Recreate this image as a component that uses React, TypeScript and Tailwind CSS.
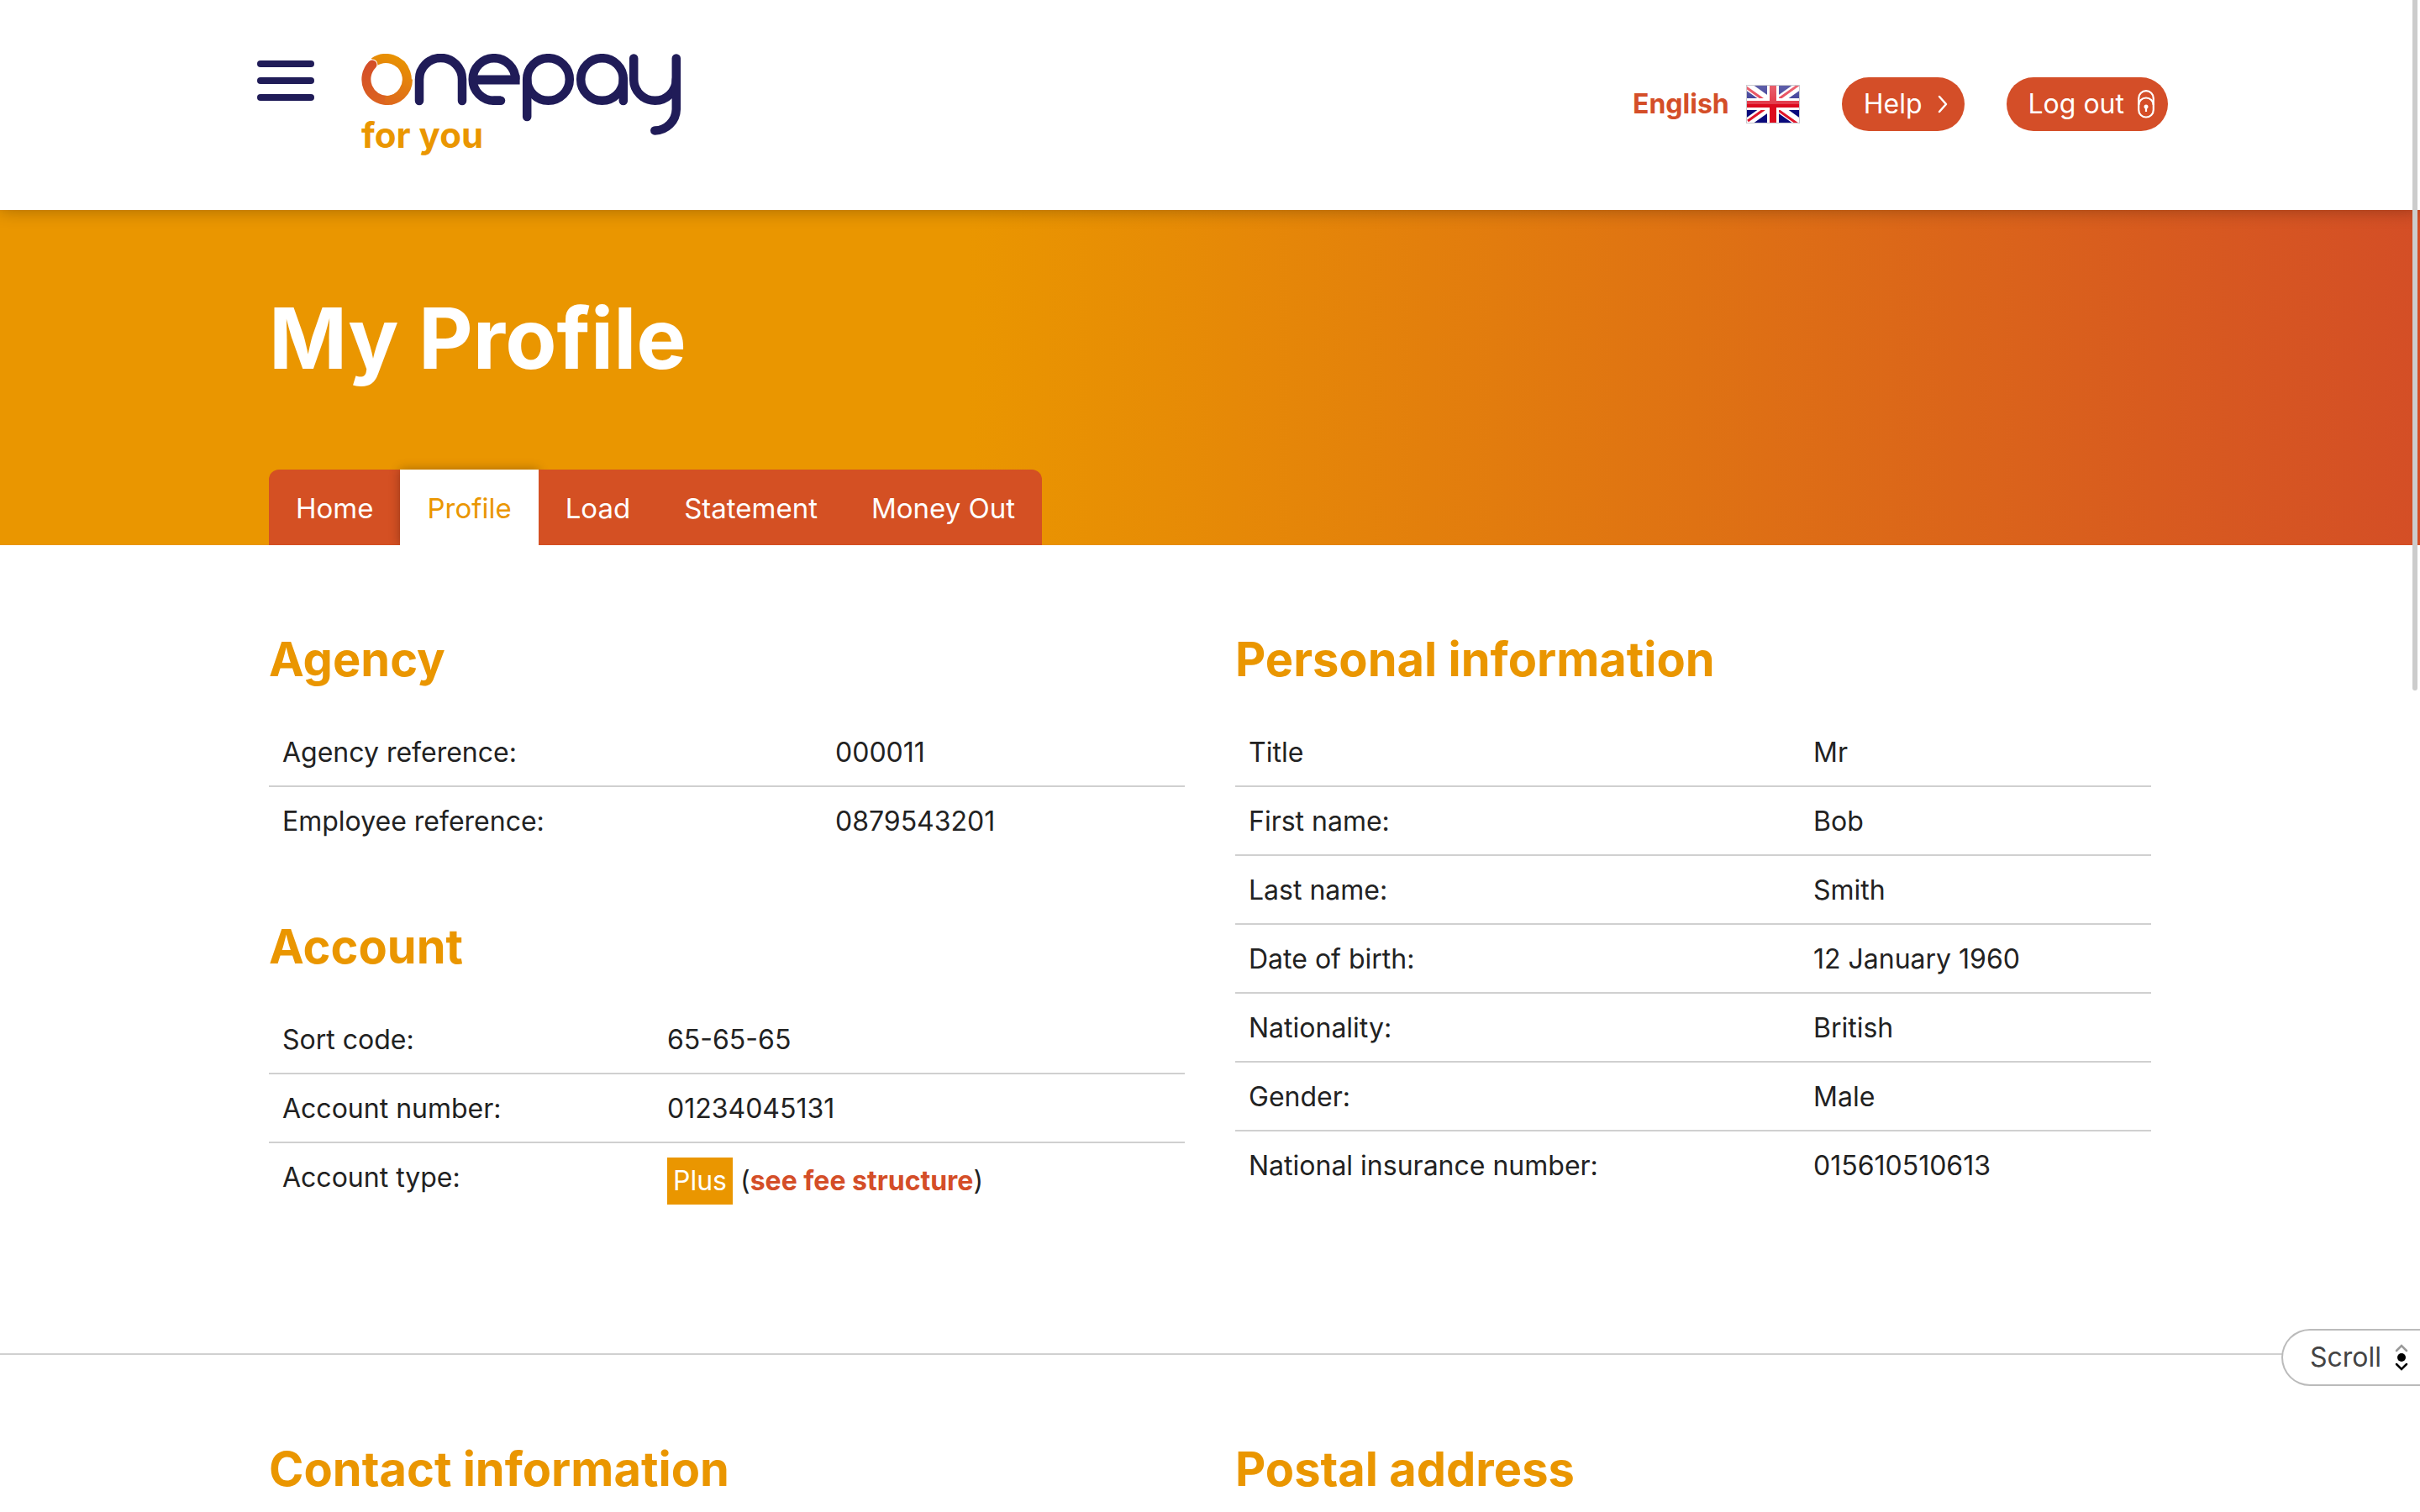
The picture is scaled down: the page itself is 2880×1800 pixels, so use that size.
import type { ReactNode } from "react";

type Row = { label: string; value: ReactNode };

const tabs = ["Home", "Profile", "Load", "Statement", "Money Out"];

const agency: Row[] = [
  { label: "Agency reference:", value: "000011" },
  { label: "Employee reference:", value: "0879543201" },
];

const account: Row[] = [
  { label: "Sort code:", value: "65-65-65" },
  { label: "Account number:", value: "01234045131" },
  {
    label: "Account type:",
    value: (
      <>
        <span className="inline-block bg-[#ea9600] px-[7px] leading-[56px] text-white">Plus</span> (
        <a href="#fees" className="font-bold text-[#d44e28]">
          see fee structure
        </a>
        )
      </>
    ),
  },
];

const personal: Row[] = [
  { label: "Title", value: "Mr" },
  { label: "First name:", value: "Bob" },
  { label: "Last name:", value: "Smith" },
  { label: "Date of birth:", value: "12 January 1960" },
  { label: "Nationality:", value: "British" },
  { label: "Gender:", value: "Male" },
  { label: "National insurance number:", value: "015610510613" },
];

function Logo() {
  return (
    <a href="#home" aria-label="onepay for you" className="flex flex-col">
      <svg width="382" height="98" viewBox="0 0 382 98" fill="none" aria-hidden="true">
        <defs>
          <linearGradient id="ring" x1="40" y1="0" x2="16" y2="60" gradientUnits="userSpaceOnUse">
            <stop offset="0" stopColor="#e99400" />
            <stop offset="1" stopColor="#dc6420" />
          </linearGradient>
          <linearGradient id="ringTail" x1="10" y1="12" x2="28" y2="58" gradientUnits="userSpaceOnUse">
            <stop offset="0" stopColor="#d44e28" />
            <stop offset="1" stopColor="#dc6420" />
          </linearGradient>
        </defs>
        <g strokeWidth="11">
          <path d="M15 10 A25 25 0 1 1 30.5 55.5" stroke="url(#ring)" />
          <path d="M13 13 A25 25 0 0 0 31 55.500" stroke="#fff" strokeWidth="13" strokeLinecap="round" />
          <path d="M13 13 A25 25 0 0 0 31 55.500" stroke="url(#ringTail)" strokeLinecap="round" />
          <path d="M28 55.400 A25 25 0 0 0 55.500 30.500" stroke="url(#ring)" />
        </g>
        <g stroke="#201c58" strokeWidth="10.5" strokeLinecap="round">
          <path d="M69 56 V30.500 a25.500 25.500 0 0 1 51 0 V56" />
          <path d="M166 55.800 H158 a25.300 25.300 0 1 1 25.300 -25.300" strokeLinecap="butt" />
          <path d="M166 55.800 H158" />
          <path d="M134 31 H188.600" strokeWidth="11" strokeLinecap="butt" />
          <circle cx="222.500" cy="30.500" r="25.300" />
          <path d="M197.200 30.500 V75" />
          <circle cx="286.500" cy="30.500" r="25.300" />
          <path d="M311.800 30.500 V56" />
          <path d="M324.200 5.500 V30.500 a25.300 25.300 0 0 0 50.600 0" />
          <path d="M374.800 5.500 V66 a26 26 0 0 1 -25.500 25.500" />
        </g>
      </svg>
      <span className="-mt-[22px] text-[42px] leading-[42px] font-bold text-[#ea9600]">for you</span>
    </a>
  );
}

function Flag() {
  return (
    <svg width="64" height="46" viewBox="0 0 64 46" aria-hidden="true">
      <defs>
        <linearGradient id="gloss" x1="0" y1="0" x2="0" y2="1">
          <stop offset="0" stopColor="#fff" stopOpacity="0.35" />
          <stop offset="1" stopColor="#fff" stopOpacity="0.2" />
        </linearGradient>
      </defs>
      <rect x="0.5" y="0.500" width="63" height="45" fill="#fff" stroke="#c9c9cf" />
      <svg x="1" y="1" width="62" height="44" viewBox="0 0 62 44">
        <rect width="62" height="44" fill="#0a0a7c" />
        <path d="M0 0 L62 44 M62 0 L0 44" stroke="#fff" strokeWidth="10" />
        <path d="M0 0 L31 22 M31 22 L62 44" stroke="#e0152a" strokeWidth="3" transform="translate(-1 2)" />
        <path d="M62 0 L31 22 M31 22 L0 44" stroke="#e0152a" strokeWidth="3" transform="translate(1 -2)" />
        <path d="M31 0 V44 M0 22 H62" stroke="#fff" strokeWidth="14" />
        <path d="M31 0 V44 M0 22 H62" stroke="#dc0a1e" strokeWidth="8" />
        <rect width="62" height="22" fill="url(#gloss)" />
      </svg>
    </svg>
  );
}

function LockIcon() {
  return (
    <svg width="20" height="34" viewBox="0 0 20 34" fill="none" stroke="#fff" strokeWidth="2.200" aria-hidden="true">
      <path d="M1.200 18 V10 a8.800 8.800 0 0 1 17.600 0 V18" />
      <rect x="1.200" y="9.500" width="17.600" height="23" rx="8.800" />
      <circle cx="10" cy="20" r="2.500" fill="#fff" stroke="none" />
      <path d="M10 20 V26" />
    </svg>
  );
}

function ScrollIcon() {
  return (
    <svg width="16" height="32" viewBox="0 0 16 32" fill="none" strokeWidth="2.500" strokeLinecap="round" aria-hidden="true">
      <path d="M2 8 L8 2 L14 8" stroke="#999" />
      <circle cx="8" cy="16" r="5" fill="#000" />
      <path d="M2 24 L8 30 L14 24" stroke="#000" />
    </svg>
  );
}

function DetailTable({ title, rows, labelWidth }: { title: string; rows: Row[]; labelWidth: string }) {
  return (
    <section>
      <h2 className="mb-[38px] text-[56px] leading-[64px] font-bold text-[#ea9600]">{title}</h2>
      <table className="w-full table-fixed border-collapse text-left">
        <tbody>
          {rows.map((row) => (
            <tr key={row.label} className="border-b-2 border-[#d0d0d0] last:border-b-0">
              <th scope="row" className={`${labelWidth} px-4 pt-[17px] pb-[15px] align-top font-normal`}>
                {row.label}
              </th>
              <td className="px-4 pt-[17px] pb-[15px] align-top">{row.value}</td>
            </tr>
          ))}
        </tbody>
      </table>
    </section>
  );
}

export default function App() {
  return (
    <div className="min-h-screen overflow-x-hidden bg-white font-['Inter',sans-serif] text-[32px] leading-[48px] text-[#222]">
      <header className="relative z-10 h-[250px] bg-white shadow-[0_0_20px_rgba(0,0,0,0.3)]">
        <div className="mx-auto flex max-w-[2280px] items-start justify-between pt-16 pl-[6px]">
          <div className="flex items-start gap-14">
            <button type="button" aria-label="Menu" className="flex flex-col gap-3 pt-2">
              <span className="h-2 w-[68px] rounded-full bg-[#201c58]" />
              <span className="h-2 w-[68px] rounded-full bg-[#201c58]" />
              <span className="h-2 w-[68px] rounded-full bg-[#201c58]" />
            </button>
            <Logo />
          </div>
          <div className="mt-7 flex h-16 items-center gap-[50px]">
            <a href="#language" className="flex items-center gap-5 font-bold text-[#d44e28]">
              English
              <Flag />
            </a>
            <a href="#help" className="flex h-16 items-center gap-[18px] rounded-full bg-[#d44e28] pr-5 pl-[26px] text-white">
              Help
              <svg width="12" height="22" viewBox="0 0 12 22" fill="none" stroke="#fff" strokeWidth="2.500" strokeLinecap="round" strokeLinejoin="round" aria-hidden="true">
                <path d="M2 2 L10 11 L2 20" />
              </svg>
            </a>
            <button type="button" className="flex h-16 items-center gap-4 rounded-full bg-[#d44e28] pr-4 pl-[26px] text-white">
              Log out
              <LockIcon />
            </button>
          </div>
        </div>
      </header>

      <div className="bg-linear-to-r/srgb from-[#ea9600] from-40% to-[#d44e26] pt-[93px]">
        <div className="mx-auto max-w-[2240px]">
          <h1 className="text-[100px] leading-[120px] font-bold text-white">My Profile</h1>
          <nav className="mt-24 flex">
            {tabs.map((tab) => (
              <a
                key={tab}
                href={`#${tab}`}
                aria-current={tab === "Profile" ? "page" : undefined}
                className="bg-[#d45023] px-8 pt-[22px] pb-5 text-[33px] text-white first:rounded-tl-xl last:rounded-tr-xl aria-[current=page]:bg-white aria-[current=page]:text-[#ea9600] aria-[current=page]:shadow-[0_0_12px_rgba(0,0,0,0.3)]"
              >
                {tab}
              </a>
            ))}
          </nav>
        </div>
      </div>

      <main className="relative bg-white">
        <div className="mx-auto grid max-w-[2240px] grid-cols-2 gap-[60px] pt-26 pb-[162px]">
          <div className="flex flex-col gap-[78px]">
            <DetailTable title="Agency" rows={agency} labelWidth="w-[658px]" />
            <DetailTable title="Account" rows={account} labelWidth="w-[458px]" />
          </div>
          <DetailTable title="Personal information" rows={personal} labelWidth="w-[672px]" />
        </div>
        <hr className="border-t-2 border-[#d0d0d0]" />
        <div className="mx-auto grid max-w-[2240px] grid-cols-2 gap-[60px] pt-26">
          <h2 className="text-[56px] leading-[64px] font-bold text-[#ea9600]">Contact information</h2>
          <h2 className="text-[56px] leading-[64px] font-bold text-[#ea9600]">Postal address</h2>
        </div>
      </main>

      <button
        type="button"
        className="fixed right-0 bottom-[150px] flex h-[68px] items-center gap-4 rounded-l-full border-2 border-r-0 border-[#bbb] bg-white pr-[14px] pl-8 text-[#444]"
      >
        Scroll
        <ScrollIcon />
      </button>
      <div className="fixed top-0 right-[3px] z-20 h-[822px] w-[6px] rounded-b-full bg-[#ccc]" />
    </div>
  );
}
